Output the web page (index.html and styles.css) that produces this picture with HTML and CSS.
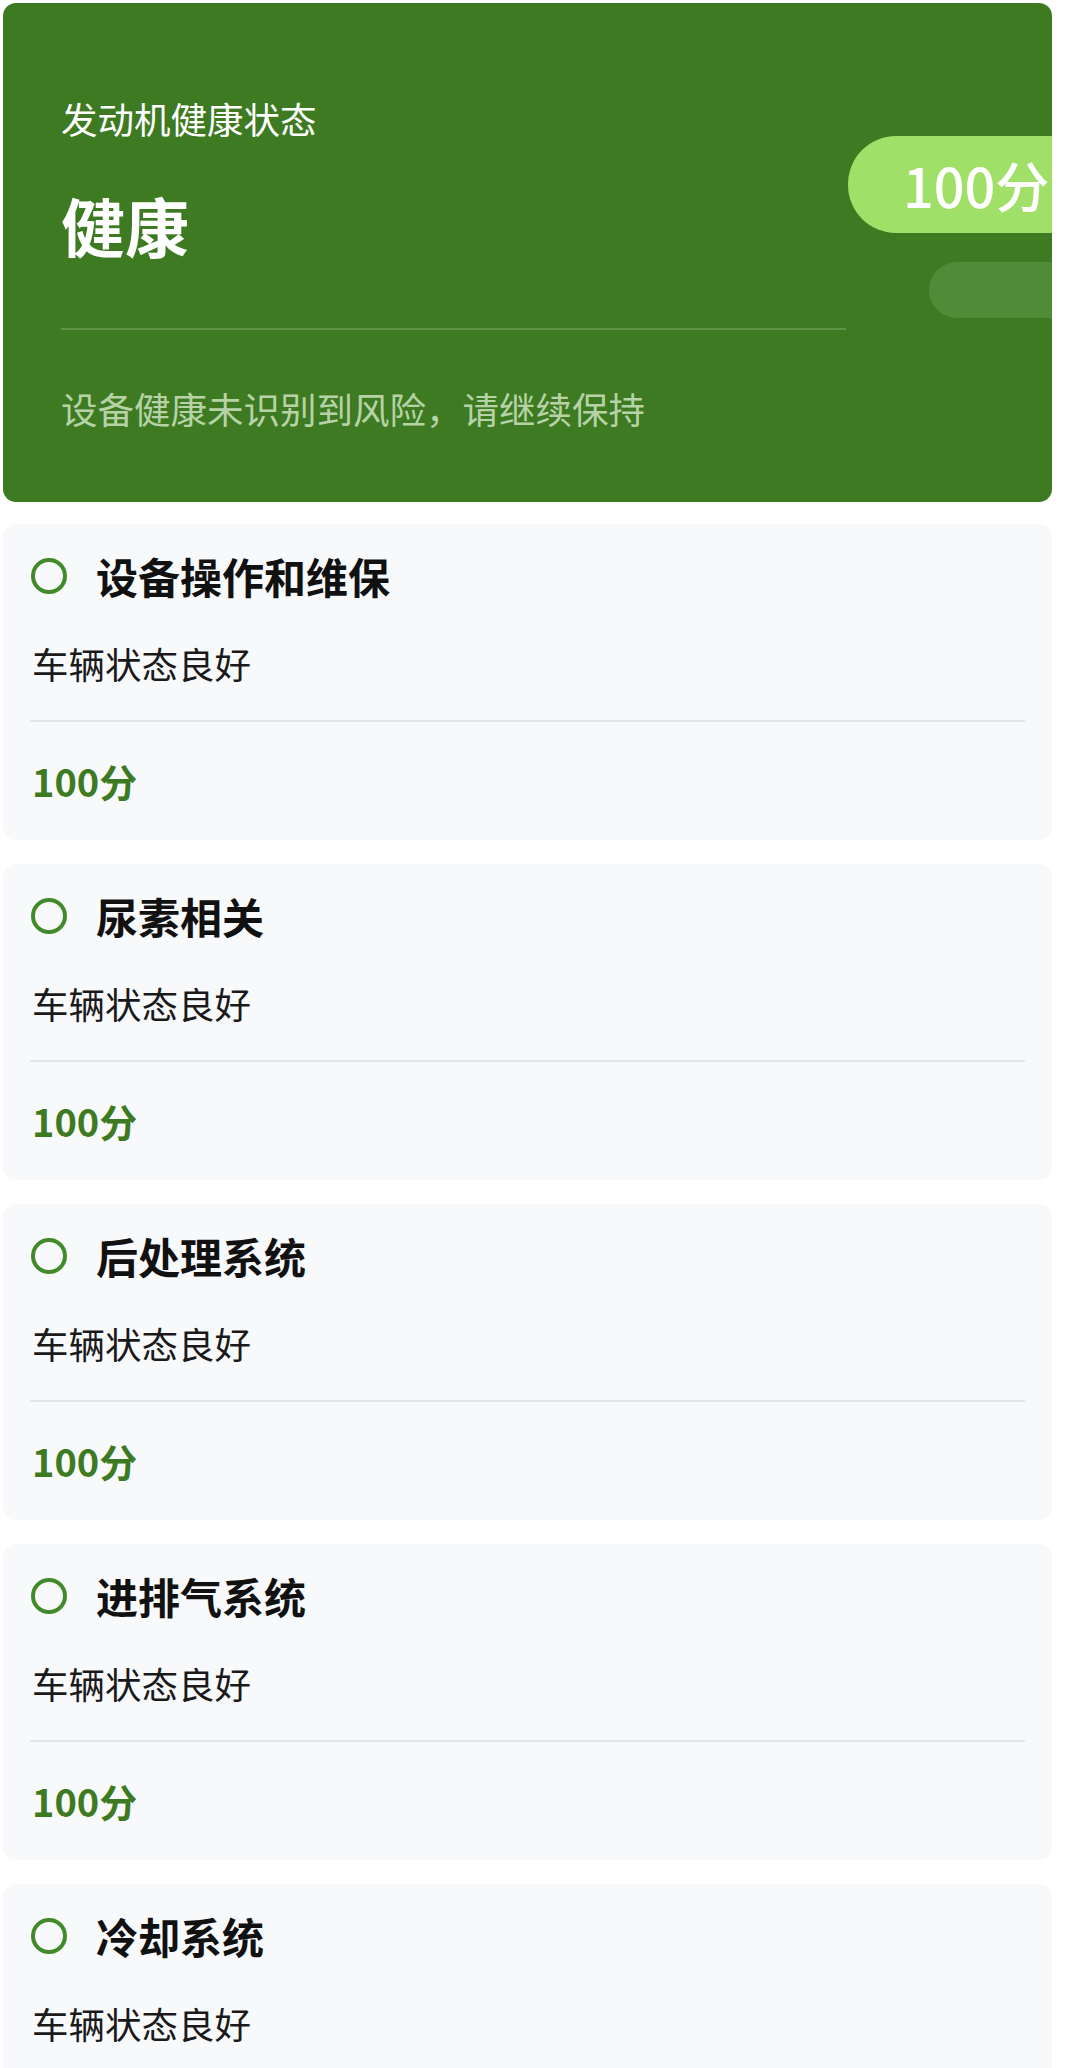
FILE: index.html
```html
<!DOCTYPE html>
<html lang="zh">
<head>
<meta charset="utf-8">
<link rel="stylesheet" href="styles.css">
</head>
<body>
<div class="page">
  <section class="hero">
    <div class="hero-main">
      <div class="hero-label">发动机健康状态</div>
      <div class="hero-status">健康</div>
      <div class="hero-line"></div>
      <div class="hero-desc">设备健康未识别到风险，请继续保持</div>
    </div>
    <div class="pill-score">100分</div>
    <div class="pill-deco"></div>
  </section>

  <section class="item">
    <div class="item-head"><span class="ring"></span><span class="item-title">设备操作和维保</span></div>
    <div class="item-desc">车辆状态良好</div>
    <div class="item-line"></div>
    <div class="item-score">100分</div>
  </section>
  <section class="item">
    <div class="item-head"><span class="ring"></span><span class="item-title">尿素相关</span></div>
    <div class="item-desc">车辆状态良好</div>
    <div class="item-line"></div>
    <div class="item-score">100分</div>
  </section>
  <section class="item">
    <div class="item-head"><span class="ring"></span><span class="item-title">后处理系统</span></div>
    <div class="item-desc">车辆状态良好</div>
    <div class="item-line"></div>
    <div class="item-score">100分</div>
  </section>
  <section class="item">
    <div class="item-head"><span class="ring"></span><span class="item-title">进排气系统</span></div>
    <div class="item-desc">车辆状态良好</div>
    <div class="item-line"></div>
    <div class="item-score">100分</div>
  </section>
  <section class="item">
    <div class="item-head"><span class="ring"></span><span class="item-title">冷却系统</span></div>
    <div class="item-desc">车辆状态良好</div>
    <div class="item-line"></div>
    <div class="item-score">100分</div>
  </section>
</div>
</body>
</html>
```

FILE: styles.css
```css
* { box-sizing: border-box; margin: 0; padding: 0; }
html, body { background: #ffffff; }
body {
  font-family: "Noto Sans CJK SC", "Noto Sans", sans-serif;
  overflow: hidden;
  height: 2068px;
}
.page {
  width: 1049px;
  margin-left: 3px;
  padding-top: 3px;
  display: flex;
  flex-direction: column;
  gap: 24px;
}
.hero {
  position: relative;
  overflow: hidden;
  background: #3d7a21;
  border-radius: 13px;
  height: 499px;
  padding: 91px 0 0 58px;
  margin-bottom: -2px;
}
.hero-main {
  width: 785px;
  display: flex;
  flex-direction: column;
}
.hero-label {
  color: #ffffff;
  font-size: 36.5px;
  line-height: 50px;
}
.hero-status {
  color: #ffffff;
  font-size: 64px;
  font-weight: 700;
  line-height: 80px;
  margin-top: 40px;
}
.hero-line {
  height: 2px;
  background: #5f9447;
  margin-top: 64px;
}
.hero-desc {
  color: #b7d2a7;
  font-size: 36.5px;
  line-height: 50px;
  margin-top: 54px;
}
.pill-score {
  position: absolute;
  left: 845px;
  top: 133px;
  width: 320px;
  height: 97px;
  border-radius: 48px;
  background: #a0df68;
  color: #ffffff;
  font-size: 54px;
  font-weight: 500;
  line-height: 97px;
  padding-left: 55px;
  white-space: nowrap;
}
.pill-deco {
  position: absolute;
  left: 926px;
  top: 259px;
  width: 260px;
  height: 56px;
  border-radius: 28px;
  background: #508b38;
}
.item {
  background: #f8f9fb;
  border-radius: 13px;
  height: 316px;
  padding: 28px 27px 0 27px;
  display: flex;
  flex-direction: column;
}
.item-head {
  display: flex;
  align-items: center;
  height: 48px;
  padding-left: 1px;
}
.ring {
  width: 36px;
  height: 36px;
  border-radius: 50%;
  border: 4px solid #418a2a;
  margin-right: 29px;
  flex: none;
}
.item-title {
  font-size: 42px;
  font-weight: 700;
  color: #111111;
  line-height: 48px;
}
.item-desc {
  font-size: 36.5px;
  color: #1a1a1a;
  line-height: 50px;
  margin-top: 39px;
  padding-left: 2px;
}
.item-line {
  height: 2px;
  background: #e3e5e9;
  margin-top: 31px;
}
.item-score {
  font-size: 38px;
  font-weight: 700;
  color: #3d7a21;
  line-height: 52px;
  margin-top: 33px;
  padding-left: 2px;
}
```
